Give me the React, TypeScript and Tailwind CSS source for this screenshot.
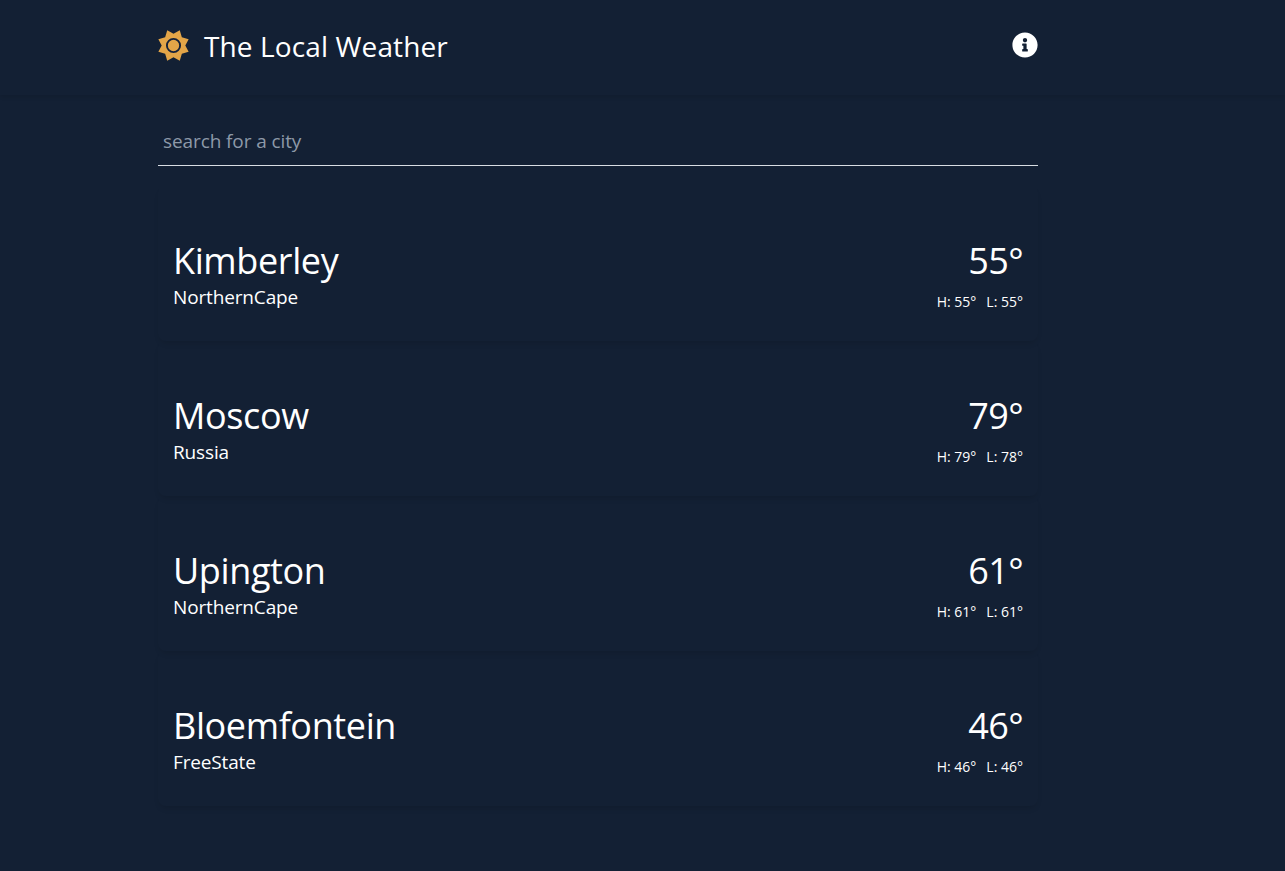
import { FaInfoCircle } from "react-icons/fa";

const cities = [
  { name: "Kimberley", region: "NorthernCape", t: 55, h: 55, l: 55 },
  { name: "Moscow", region: "Russia", t: 79, h: 79, l: 78 },
  { name: "Upington", region: "NorthernCape", t: 61, h: 61, l: 61 },
  { name: "Bloemfontein", region: "FreeState", t: 46, h: 46, l: 46 },
];

function SunIcon() {
  const pts: string[] = [];
  for (let i = 0; i < 16; i++) {
    const r = i % 2 === 0 ? 16.4 : 11.8;
    const a = (Math.PI * 2 * i) / 16 - Math.PI / 2 + Math.PI / 8;
    pts.push(`${15.5 + r * Math.cos(a)},${15.5 + r * Math.sin(a)}`);
  }
  return (
    <svg viewBox="0 0 31 31" className="mb-[2px] h-[31px] w-[31px] shrink-0">
      <polygon points={pts.join(" ")} fill="#e3a548" />
      <circle cx="15.5" cy="15.5" r="6.6" fill="#e3a548" stroke="#14213a" strokeWidth="1.9" />
    </svg>
  );
}

export default function App() {
  return (
    <div className="min-h-[871px] bg-[#132034] text-white font-['Open_Sans','Noto_Sans',sans-serif]">
      <header className="h-[95px] bg-[#132034] shadow-[0_2px_4px_rgba(0,0,0,0.1)]">
        <div className="ml-[158px] flex w-[880px] items-start justify-between">
          <div className="flex items-center gap-[15px] pt-[28px]">
            <SunIcon />
            <h1 className="text-[28px] leading-[36px] tracking-[0.12px]">The Local Weather</h1>
          </div>
          <FaInfoCircle className="mt-[32px] h-[26px] w-[26px] text-white" />
        </div>
      </header>
      <main className="ml-[158px] w-[880px]">
        <div className="mt-[25px] border-b border-[#d8dde3] px-[5px] pb-[10px] pt-[8px]">
          <input
            placeholder="search for a city"
            className="block h-[27px] w-full bg-transparent text-[19px] tracking-[-0.1px] outline-none placeholder:text-[#8d99a8]"
          />
        </div>
        <div className="mt-[20px]">
          {cities.map((c) => (
            <div
              key={c.name}
              className="flex h-[155px] items-start justify-between rounded-lg px-[15px] pt-[51px] shadow-[0_4px_6px_-2px_rgba(0,0,0,0.12)]"
            >
              <div>
                <div className="text-[36px] leading-[48px] tracking-[-0.38px]">{c.name}</div>
                <div className="text-[19px] leading-[24px] tracking-[-0.15px]">{c.region}</div>
              </div>
              <div className="text-right">
                <div className="text-[36px] leading-[48px] tracking-[-0.6px]">{c.t}°</div>
                <div className="mt-[7px] flex justify-end gap-[10px] text-[14px] leading-[20px]">
                  <span>H: {c.h}°</span>
                  <span>L: {c.l}°</span>
                </div>
              </div>
            </div>
          ))}
        </div>
      </main>
    </div>
  );
}
